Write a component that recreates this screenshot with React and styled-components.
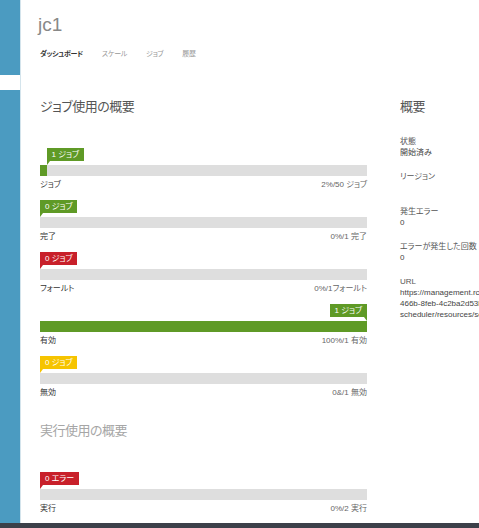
import styled, { createGlobalStyle } from 'styled-components'

const GlobalStyle = createGlobalStyle`
    html, body {
        margin: 0;
        padding: 0;
        background: #fff;
    }
    body {
        font-family: 'Liberation Sans', 'Noto Sans CJK JP', sans-serif;
        font-feature-settings: 'palt';
    }
`

const jobRows = [
    { badge: '1 ジョブ', color: '#5f9a26', percent: 2, label: 'ジョブ', stat: '2%/50 ジョブ' },
    { badge: '0 ジョブ', color: '#5f9a26', percent: 0, label: '完了', stat: '0%/1 完了' },
    { badge: '0 ジョブ', color: '#c8202a', percent: 0, label: 'フォールト', stat: '0%/1フォールト' },
    { badge: '1 ジョブ', color: '#5f9a26', percent: 100, label: '有効', stat: '100%/1 有効' },
    { badge: '0 ジョブ', color: '#f6c400', percent: 0, label: '無効', stat: '0&/1 無効' },
]

const summary = [
    { label: '状態', value: '開始済み' },
    { label: 'リージョン', value: '' },
    { label: '発生エラー', value: '0' },
    { label: 'エラーが発生した回数', value: '0' },
]

function UsageRow({ row }) {
    const atEnd = row.percent === 100
    return (
        <Row>
            <BadgeLine $end={atEnd} style={atEnd ? null : { paddingLeft: `${row.percent}%` }}>
                <Badge $color={row.color} $end={atEnd}>{row.badge}</Badge>
            </BadgeLine>
            <Bar>
                <Fill $color={row.color} style={{ width: `${row.percent}%` }} />
            </Bar>
            <Labels>
                <Label>{row.label}</Label>
                <Stat>{row.stat}</Stat>
            </Labels>
        </Row>
    )
}

function App() {
    return (
        <Shell>
            <GlobalStyle />
            <Body>
                <Sidebar>
                    <Band />
                </Sidebar>
                <Main>
                    <Title>jc1</Title>
                    <Tabs>
                        <Tab $active>ダッシュボード</Tab>
                        <Tab>スケール</Tab>
                        <Tab>ジョブ</Tab>
                        <Tab>履歴</Tab>
                    </Tabs>
                    <Columns>
                        <LeftCol>
                            <Heading>ジョブ使用の概要</Heading>
                            {jobRows.map((row, i) => (
                                <UsageRow key={i} row={row} />
                            ))}
                            <Heading $muted $top={24}>実行使用の概要</Heading>
                            <UsageRow
                                row={{ badge: '0 エラー', color: '#c8202a', percent: 0, label: '実行', stat: '0%/2 実行' }}
                            />
                        </LeftCol>
                        <RightCol>
                            <Heading $bottom={19}>概要</Heading>
                            {summary.map((item) => (
                                <Group key={item.label}>
                                    <ItemLabel>{item.label}</ItemLabel>
                                    <ItemValue>{item.value}</ItemValue>
                                </Group>
                            ))}
                            <Group>
                                <ItemLabel>URL</ItemLabel>
                                <ItemValue>https://management.rcl</ItemValue>
                                <ItemValue>466b-8feb-4c2ba2d53b</ItemValue>
                                <ItemValue>scheduler/resources/scl</ItemValue>
                            </Group>
                        </RightCol>
                    </Columns>
                </Main>
            </Body>
            <Footer />
        </Shell>
    )
}

export default App

const Shell = styled.div`
    display: flex;
    flex-direction: column;
    width: 479px;
    height: 528px;
    overflow: hidden;
`

const Body = styled.div`
    display: flex;
    flex: 1;
    min-height: 0;
`

const Sidebar = styled.div`
    width: 20px;
    flex-shrink: 0;
    background: #4b9bc1;
    border-right: 1px solid #d4e4ec;
    padding-top: 75px;
`

const Band = styled.div`
    height: 15px;
    background: #fff;
`

const Main = styled.div`
    flex: 1;
    padding: 12px 0 0 18px;
    overflow: hidden;
`

const Title = styled.div`
    font-size: 19px;
    color: #888;
    line-height: 26px;
    height: 26px;
    margin-left: -1px;
`

const Tabs = styled.div`
    display: flex;
    gap: 19px;
    margin-top: 9px;
    padding-left: 1px;
    height: 12px;
    align-items: center;
`

const Tab = styled.span`
    font-size: 7px;
    letter-spacing: -0.3px;
    color: ${({ $active }) => ($active ? '#333' : '#999')};
    font-weight: ${({ $active }) => ($active ? 600 : 400)};
`

const Columns = styled.div`
    display: flex;
    margin-top: 38px;
    padding-left: 1px;
`

const LeftCol = styled.div`
    width: 327px;
    flex-shrink: 0;
`

const RightCol = styled.div`
    margin-left: 33px;
    white-space: nowrap;
`

const Heading = styled.div`
    font-size: 13px;
    letter-spacing: -0.5px;
    line-height: 20px;
    height: 20px;
    color: ${({ $muted }) => ($muted ? '#a6a6a6' : '#555')};
    margin-top: ${({ $top }) => $top || 0}px;
    margin-bottom: ${({ $bottom }) => $bottom ?? 31}px;
`

const Row = styled.div`
    margin-bottom: 11px;
`

const BadgeLine = styled.div`
    display: flex;
    justify-content: ${({ $end }) => ($end ? 'flex-end' : 'flex-start')};
    height: 13px;
    margin-bottom: 4px;
`

const Badge = styled.div`
    position: relative;
    height: 13px;
    line-height: 13px;
    padding: 0 5px;
    background: ${({ $color }) => $color};
    color: #fff;
    font-size: 8px;
    white-space: nowrap;

    &::after {
        content: '';
        position: absolute;
        top: 100%;
        ${({ $end }) => ($end ? 'right: 0;' : 'left: 0;')}
        border-top: 4px solid ${({ $color }) => $color};
        ${({ $end }) =>
            $end ? 'border-left: 3px solid transparent;' : 'border-right: 3px solid transparent;'}
    }
`

const Bar = styled.div`
    height: 11px;
    background: #dedede;
    display: flex;
`

const Fill = styled.div`
    height: 100%;
    background: ${({ $color }) => $color};
`

const Labels = styled.div`
    display: flex;
    justify-content: space-between;
    align-items: center;
    height: 12px;
    margin-top: 1px;
    font-size: 8px;
`

const Label = styled.span`
    color: #333;
`

const Stat = styled.span`
    color: #666;
`

const Group = styled.div`
    margin-bottom: 13px;
    font-size: 8px;
`

const ItemLabel = styled.div`
    height: 11px;
    line-height: 11px;
    color: #555;
`

const ItemValue = styled.div`
    min-height: 11px;
    line-height: 11px;
    color: #444;
`

const Footer = styled.div`
    height: 5px;
    background: #3c4049;
    flex-shrink: 0;
`
